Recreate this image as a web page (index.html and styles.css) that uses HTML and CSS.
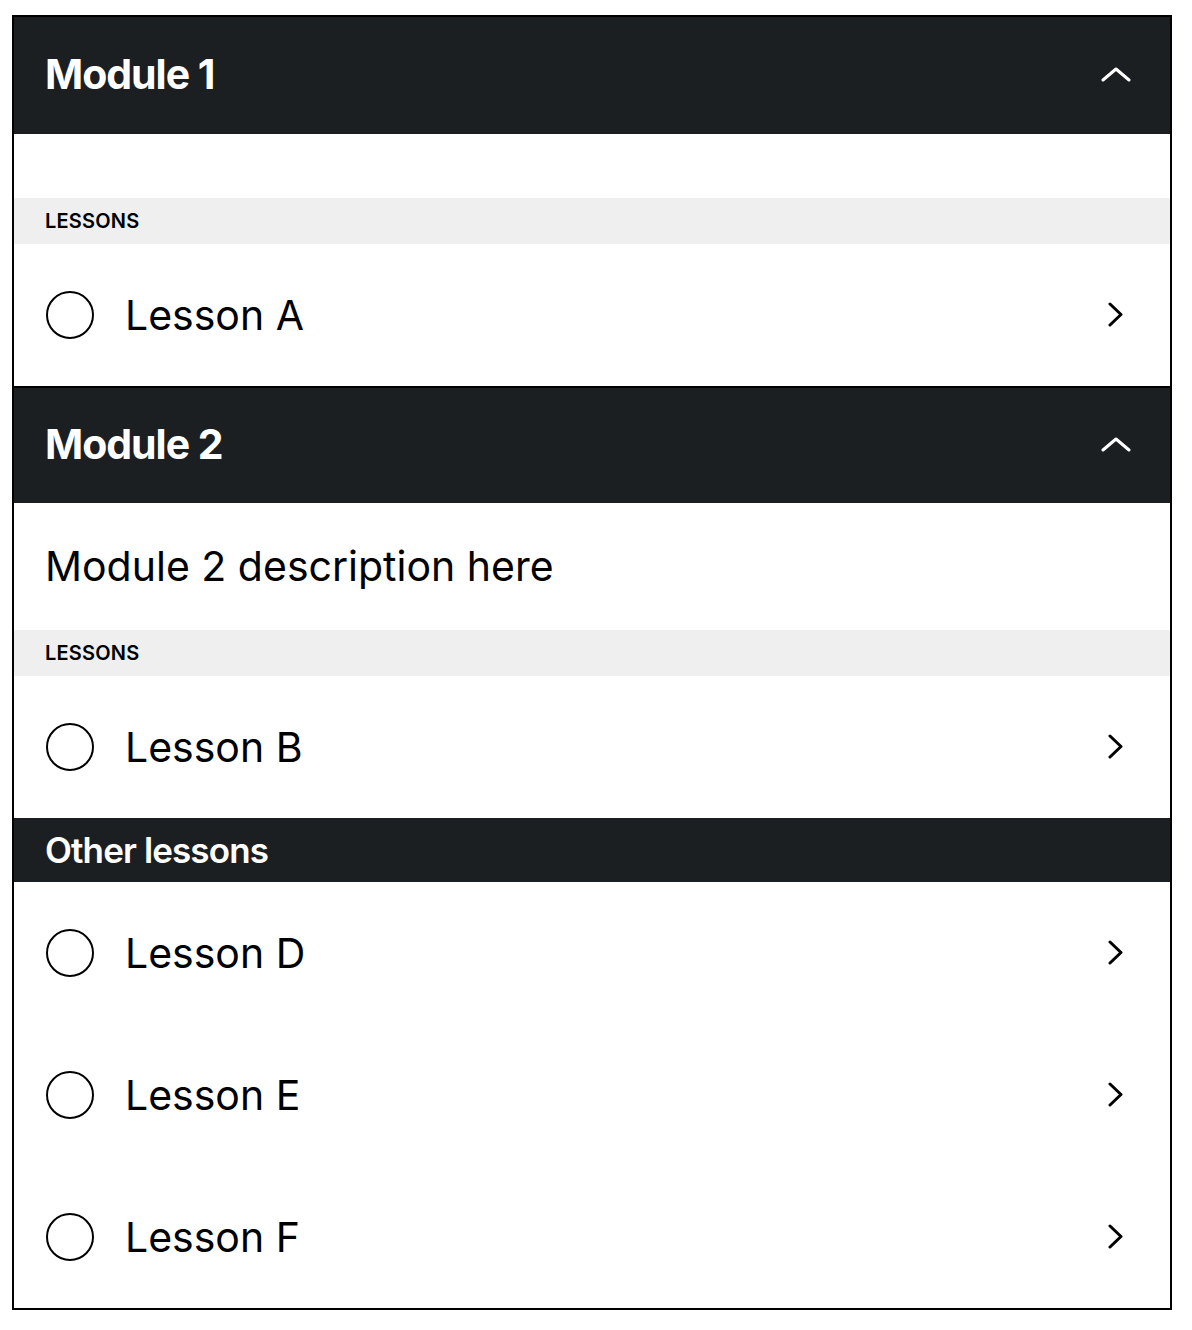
FILE: index.html
```html
<!DOCTYPE html>
<html lang="en">
<head>
    <meta charset="UTF-8">
    <meta name="viewport" content="width=device-width, initial-scale=1.0">
    <title>Course Modules</title>
    <link rel="stylesheet" href="styles.css">
</head>
<body>
    <div class="course">

        <!-- Module 1 -->
        <div class="module">
            <div class="module-header">
                <h2>Module 1</h2>
                <svg class="chevron-up" width="32" height="18" viewBox="0 0 32 18"><polyline points="2,15 15,4 28,15" /></svg>
            </div>
            <div class="module-desc"></div>
            <div class="section-label">LESSONS</div>
            <div class="lesson">
                <span class="status"></span>
                <span class="lesson-title">Lesson A</span>
                <svg class="chevron-right" width="16" height="26" viewBox="0 0 16 26"><polyline points="2,2 13,12.5 2,23" /></svg>
            </div>
        </div>

        <!-- Module 2 -->
        <div class="module">
            <div class="module-header">
                <h2>Module 2</h2>
                <svg class="chevron-up" width="32" height="18" viewBox="0 0 32 18"><polyline points="2,15 15,4 28,15" /></svg>
            </div>
            <div class="module-desc">Module 2 description here</div>
            <div class="section-label">LESSONS</div>
            <div class="lesson">
                <span class="status"></span>
                <span class="lesson-title">Lesson B</span>
                <svg class="chevron-right" width="16" height="26" viewBox="0 0 16 26"><polyline points="2,2 13,12.5 2,23" /></svg>
            </div>
        </div>

        <!-- Other lessons -->
        <div class="other-header">Other lessons</div>
        <div class="lesson">
            <span class="status"></span>
            <span class="lesson-title">Lesson D</span>
            <svg class="chevron-right" width="16" height="26" viewBox="0 0 16 26"><polyline points="2,2 13,12.5 2,23" /></svg>
        </div>
        <div class="lesson">
            <span class="status"></span>
            <span class="lesson-title">Lesson E</span>
            <svg class="chevron-right" width="16" height="26" viewBox="0 0 16 26"><polyline points="2,2 13,12.5 2,23" /></svg>
        </div>
        <div class="lesson">
            <span class="status"></span>
            <span class="lesson-title">Lesson F</span>
            <svg class="chevron-right" width="16" height="26" viewBox="0 0 16 26"><polyline points="2,2 13,12.5 2,23" /></svg>
        </div>

    </div>
</body>
</html>
```

FILE: styles.css
```css
body {
    margin: 0;
    font-family: 'Inter', 'Noto Sans', sans-serif;
    color: #000;
    background: #fff;
}

.course {
    margin: 15px 20px 0 12px;
    border: 2px solid #000;
}

/* Module header */
.module-header {
    display: flex;
    align-items: center;
    justify-content: space-between;
    height: 117px;
    box-sizing: border-box;
    padding: 0 37px 3px 31px;
    background-color: #1c1f22;
    color: #fff;
}

.module + .module .module-header {
    border-top: 2px solid #000;
}

.module-header h2 {
    margin: 0;
    font-size: 41px;
    font-weight: 700;
    letter-spacing: -0.025em;
}

.chevron-up polyline,
.chevron-right polyline {
    fill: none;
    stroke-width: 3;
    stroke-linecap: round;
    stroke-linejoin: round;
}

.chevron-up polyline {
    stroke: #fff;
}

.chevron-right polyline {
    stroke: #000;
}

.module-desc {
    padding: 32px 31px;
    font-size: 41px;
    line-height: 63px;
}

.module-desc:empty {
    padding-bottom: 32px;
    height: 0;
}

.section-label {
    height: 46px;
    display: flex;
    align-items: center;
    padding: 0 31px;
    background-color: #efefef;
    font-size: 20px;
    font-weight: 600;
    letter-spacing: 0.01em;
}

/* Lesson rows */
.lesson {
    display: flex;
    align-items: center;
    height: 142px;
    padding: 0 46px 0 32px;
}

.status {
    width: 44px;
    height: 44px;
    border: 2px solid #000;
    border-radius: 50%;
    flex-shrink: 0;
}

.lesson-title {
    flex: 1;
    margin-left: 31px;
    font-size: 41px;
}

.other-header {
    height: 64px;
    display: flex;
    align-items: center;
    padding: 0 31px;
    background-color: #1c1f22;
    color: #fff;
    font-size: 35px;
    font-weight: 600;
    letter-spacing: -0.025em;
}
```
